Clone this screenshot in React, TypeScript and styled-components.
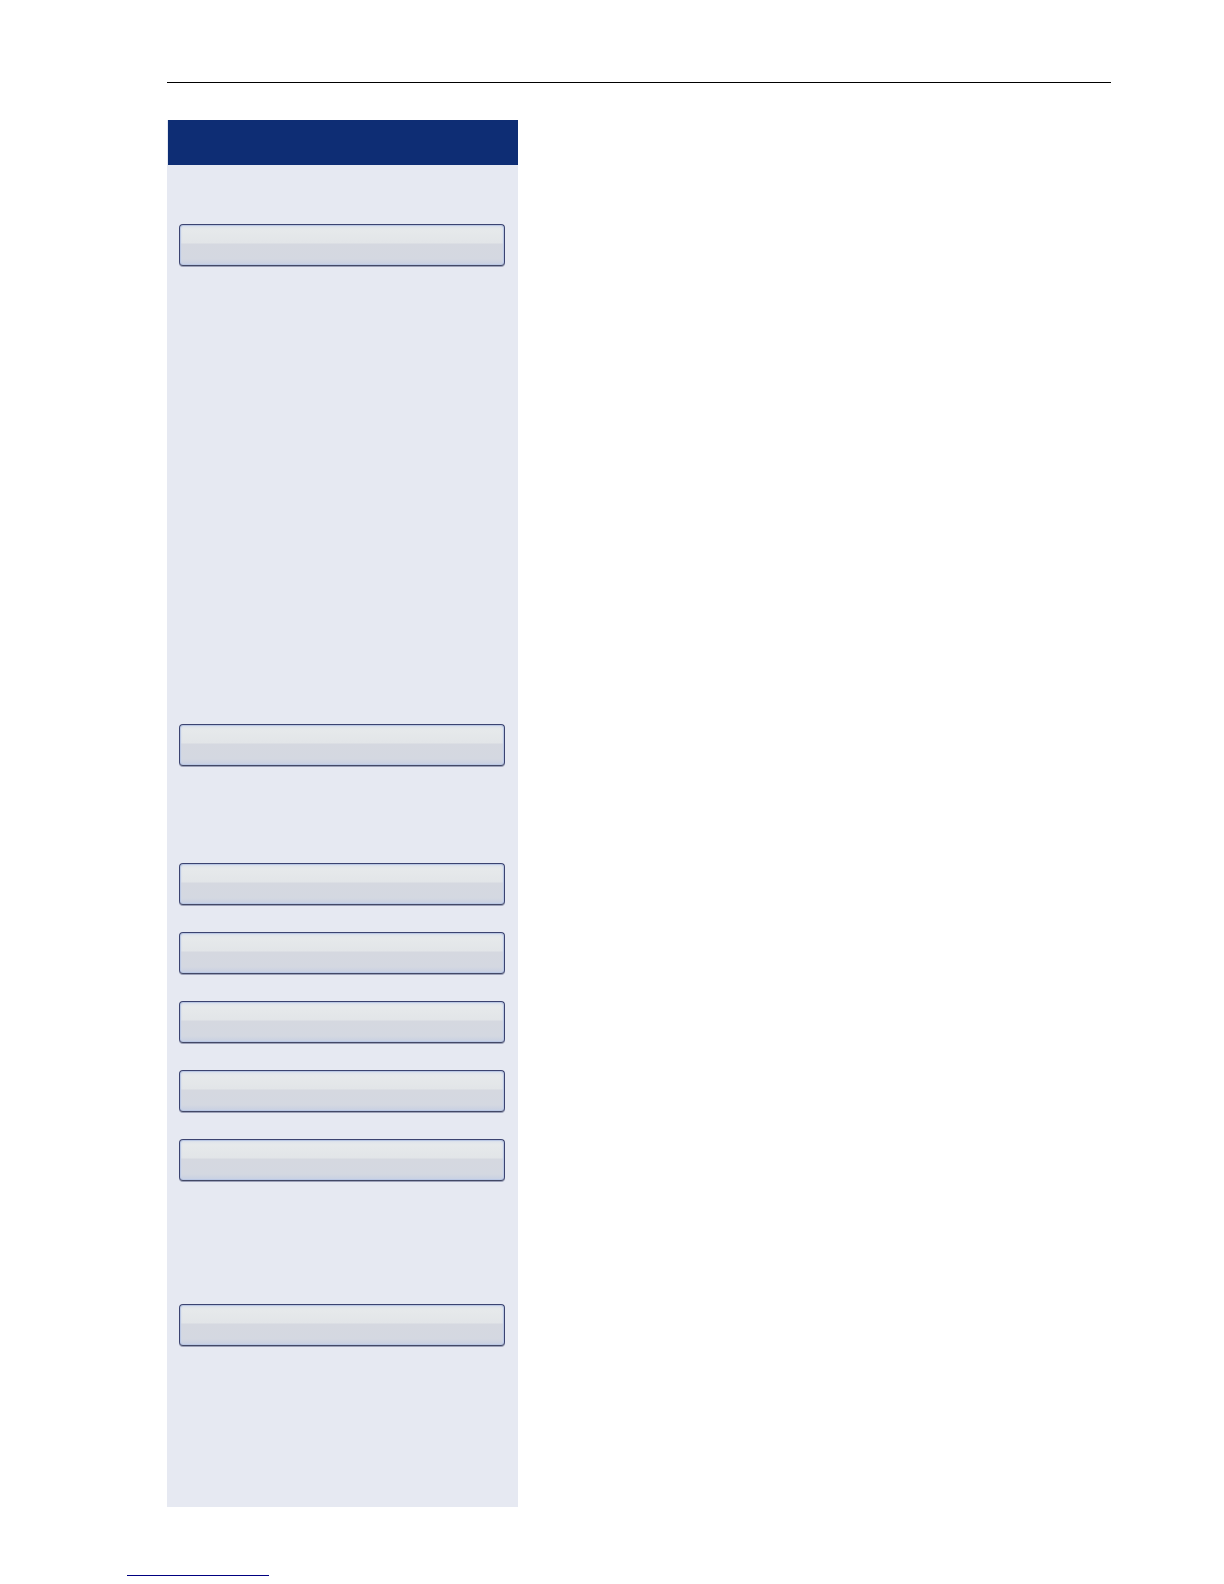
import React from "react";
import styled, { createGlobalStyle } from "styled-components";

const GlobalStyle = createGlobalStyle`
  *, *::before, *::after { box-sizing: border-box; }
  body {
    margin: 0;
    background: #fff;
    font-family: "Liberation Sans", Arial, sans-serif;
  }
`;

const Page = styled.div`
  display: flex;
  flex-direction: column;
  padding: 82px 113px 8px 127px;
`;

const Sheet = styled.main`
  display: flex;
  flex-direction: column;
  padding-left: 40px;
`;

const Rule = styled.hr`
  width: 100%;
  height: 1px;
  margin: 0 0 37px;
  border: 0;
  background: #000;
`;

const Sidebar = styled.aside`
  width: 100%;
  max-width: 351px;
  background: #e6e9f2;
`;

const SidebarHeader = styled.header`
  height: 45px;
  margin-left: 1px;
  background: #0e2d74;
`;

const KeyList = styled.nav`
  display: flex;
  flex-direction: column;
  gap: 97px;
  padding: 59px 13px 161px 12px;
`;

const KeyGroup = styled.div<{ $before?: number }>`
  display: flex;
  flex-direction: column;
  gap: 27px;
  margin-top: ${({ $before = 0 }) => $before}px;
`;

const Key = styled.button`
  width: 100%;
  height: 42px;
  padding: 0;
  border: 1px solid #3b4370;
  border-bottom-color: #424866;
  border-radius: 4px;
  background: linear-gradient(
    to bottom,
    #dfe4eb 0,
    #e6e9eb 5px,
    #e2e5e8 18px,
    #d5d8e0 19px,
    #d4d8e1 34px,
    #c7cfe2 100%
  );
  box-shadow:
    0 1px 0 #9ba0b8,
    inset 0 0 0 1px #bac7e3,
    inset 0 0 2px 1px #cbd5ea;
  cursor: pointer;
`;

const Footer = styled.footer`
  display: flex;
  padding-top: 51px;
`;

const FooterLink = styled.a`
  width: 142px;
  height: 18px;
  border-bottom: 1px solid #000080;
`;

const keyGroups = [
  { keys: 1 },
  { keys: 1, before: 361 },
  { keys: 5 },
  { keys: 1, before: 26 },
];

export default function App() {
  return (
    <>
      <GlobalStyle />
      <Page>
        <Sheet>
          <Rule />
          <Sidebar>
            <SidebarHeader />
            <KeyList>
              {keyGroups.map((group, index) => (
                <KeyGroup key={index} $before={group.before}>
                  {Array.from({ length: group.keys }, (_, key) => (
                    <Key key={key} type="button" />
                  ))}
                </KeyGroup>
              ))}
            </KeyList>
          </Sidebar>
        </Sheet>
        <Footer>
          <FooterLink href="#" />
        </Footer>
      </Page>
    </>
  );
}
